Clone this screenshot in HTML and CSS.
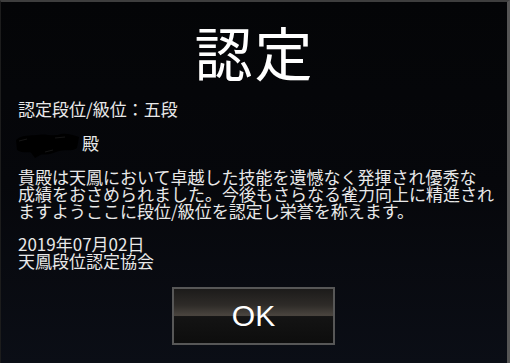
FILE: index.html
```html
<!DOCTYPE html>
<html lang="ja">
<head>
    <meta charset="UTF-8">
    <title>認定</title>
    <link rel="stylesheet" href="styles.css">
</head>
<body>
    <div class="dialog">
        <h1 class="dialog_title">認定</h1>
        <div class="rank_line">認定段位/級位：五段</div>
        <div class="name_line">
            <svg class="name_mask" width="66" height="28" viewBox="0 0 66 28">
                <path d="M1 9 C8 3 16 5 22 4 C30 2 38 6 46 3 C52 2 58 4 64 6 L62 17 C56 21 50 18 44 20 C36 23 30 25 22 22 C16 20 8 23 2 19 Z" fill="#000"/>
                <path d="M14 19 L20 27 L27 23 L25 16 Z" fill="#000"/>
                <path d="M4 10 L12 8 M40 7 L50 6 M30 21 L38 19" stroke="#161616" stroke-width="1"/>
            </svg>
            <span>殿</span>
        </div>
        <p class="message">
            貴殿は天鳳において卓越した技能を遺憾なく発揮され優秀な<br>
            成績をおさめられました。今後もさらなる雀力向上に精進され<br>
            ますようここに段位/級位を認定し栄誉を称えます。
        </p>
        <div class="signature">
            2019年07月02日<br>
            天鳳段位認定協会
        </div>
        <div class="button_row">
            <button class="ok_button" type="button">OK</button>
        </div>
    </div>
</body>
</html>
```

FILE: styles.css
```css
html, body {
    margin: 0;
    height: 100%;
}
body {
    background: #000;
    font-family: "Noto Sans CJK JP", "Noto Sans", sans-serif;
    color: #e9e9e9;
}
.dialog {
    box-sizing: border-box;
    height: 363px;
    padding: 0 16px 0 17px;
    border-top: 2px solid #3e3e3e;
    border-left: 1px solid #1c1c1c;
    border-right: 3px solid #555;
    background: linear-gradient(180deg, #040507 0%, #06070b 50%, #0b0e16 100%);
}
.dialog_title {
    margin: 0;
    padding-top: 17px;
    font-size: 58px;
    line-height: 64px;
    font-weight: 400;
    text-align: center;
    color: #fff;
    letter-spacing: 2px;
}
.rank_line, .name_line, .message, .signature {
    font-size: 17px;
    line-height: 17px;
    white-space: nowrap;
}
.rank_line {
    margin-top: 17px;
}
.name_line {
    margin-top: 17px;
    display: flex;
    align-items: center;
    height: 17px;
}
.name_mask {
    margin: 5px 1px 0 -3px;
}
.message {
    margin: 17px 0 0;
}
.signature {
    margin-top: 16px;
}
.button_row {
    display: flex;
    justify-content: center;
    margin-top: 18px;
    padding-right: 2px;
}
.ok_button {
    width: 163px;
    height: 58px;
    border: 2px solid #575757;
    background: linear-gradient(180deg, #1c1b1a 0%, #2e2b28 30%, #4a453f 49%, #141414 51%, #0d0d0d 100%);
    color: #fff;
    font-family: "Liberation Sans", Arial, sans-serif;
    font-size: 30px;
    padding: 0;
    cursor: pointer;
}
```
